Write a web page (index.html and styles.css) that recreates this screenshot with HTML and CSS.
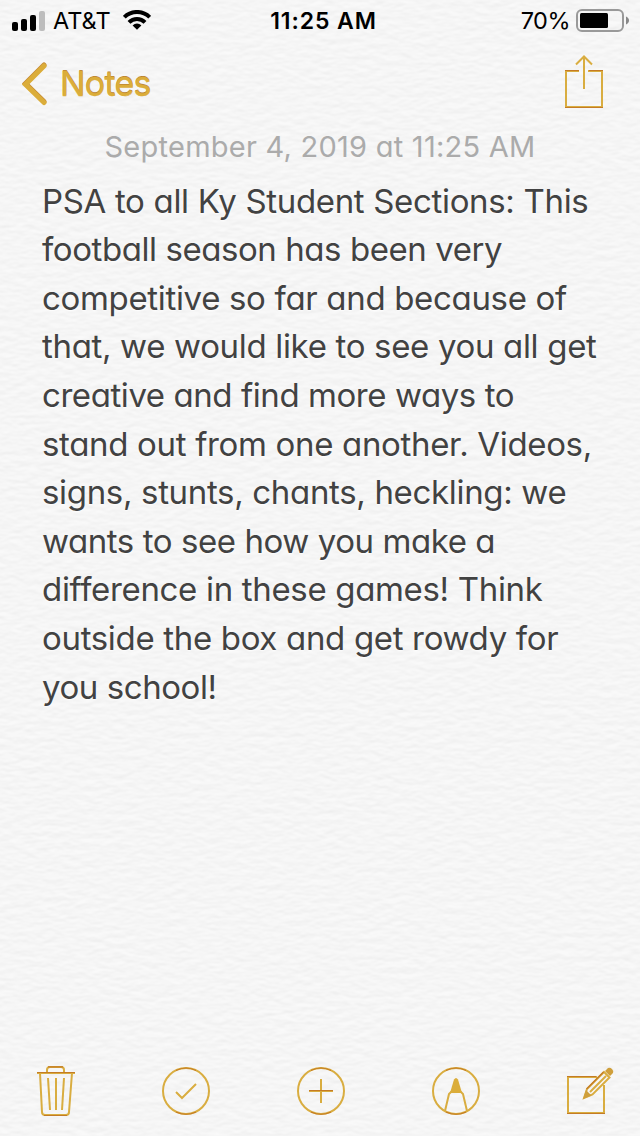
FILE: index.html
```
<!doctype html>
<html lang="en">
    <head>
        <meta charset="utf-8">
        <meta name="viewport" content="width=device-width,initial-scale=1">
        <title>Notes</title>
        <link rel="stylesheet" href="styles.css">
    </head>
    <body>
        <svg class="paper" width="640" height="1136" aria-hidden="true">
            <filter id="grain" x="0" y="0" width="100%" height="100%" color-interpolation-filters="sRGB">
                <feTurbulence type="fractalNoise" baseFrequency="0.08 0.17" numOctaves="2" seed="4"/>
                <feColorMatrix values="0 0 0 0 0.5  0 0 0 0 0.5  0 0 0 0 0.5  1 0 0 0 0"/>
                <feDiffuseLighting surfaceScale="0.35" diffuseConstant="1.13" lighting-color="#f6f6f6">
                    <feDistantLight azimuth="270" elevation="62"/>
                </feDiffuseLighting>
            </filter>
            <rect width="640" height="1136" filter="url(#grain)"/>
        </svg>
        <div class="screen">
            <header class="status">
                <div class="carrier">
                    <svg width="34" height="22" viewBox="0 0 34 22">
                        <rect x="0" y="12" width="6" height="9" rx="2"/>
                        <rect x="9" y="9" width="6" height="12" rx="2"/>
                        <rect x="18" y="5" width="6" height="16" rx="2"/>
                        <rect x="27" y="1" width="6" height="20" rx="2" fill="#bdbdbd"/>
                    </svg>
                    <span class="network">AT&amp;T</span>
                    <svg class="wifi" width="28" height="20" viewBox="0 0 28 20">
                        <g fill="none" stroke="#000" stroke-width="4">
                            <path d="M1.3 7.2a18 18 0 0 1 25.4 0"/>
                            <path d="M6 12.400a11.3 11.3 0 0 1 16 0"/>
                        </g>
                        <path d="M9.6 15.4a6.2 6.2 0 0 1 8.8 0L14 19.8z"/>
                    </svg>
                </div>
                <div class="time">11:25 AM</div>
                <div class="power">
                    <span class="percent">70%</span>
                    <svg width="53" height="24" viewBox="0 0 53 24">
                        <rect x="1" y="1" width="46" height="21" rx="5" fill="none" stroke="#999" stroke-width="2"/>
                        <rect x="4" y="4" width="28" height="15" rx="1.5"/>
                        <path d="M50 7.5c4 1.5 4 6.5 0 8z" fill="#888"/>
                    </svg>
                </div>
            </header>
            <nav class="navbar">
                <a class="back">
                    <svg class="icon" width="26" height="44" viewBox="0 0 26 44">
                        <path d="M23 4 4.500 22.500l18.500 18" fill="none" stroke="#dbad3a" stroke-width="5" stroke-linecap="round"/>
                    </svg>
                    <span class="label">Notes</span>
                </a>
                <svg class="icon share" width="40" height="54" viewBox="0 0 40 54">
                    <g class="line">
                        <path d="M15 16H2v36h36V16H24M20 34V2M12 9.500l8-8 8 8"/>
                    </g>
                    <path class="edge" d="M1 15.500h14M25 15.500h14M1 52.500h38"/>
                </svg>
            </nav>
            <main class="note">
                <div class="date">September 4, 2019 at 11:25 AM</div>
                <p class="text">
                    <span>PSA to all Ky Student Sections: This</span><br>
                    <span class="tight">football season has been very</span><br>
                    <span>competitive so far and because of</span><br>
                    <span>that, we would like to see you all get</span><br>
                    <span class="tight">creative and find more ways to</span><br>
                    <span>stand out from one another. Videos,</span><br>
                    <span>signs, stunts, chants, heckling: we</span><br>
                    <span class="tight">wants to see how you make a</span><br>
                    <span>difference in these games! Think</span><br>
                    <span>outside the box and get rowdy for</span><br>
                    <span class="tight">you school!</span>
                </p>
            </main>
            <footer class="toolbar">
                <svg class="icon" width="40" height="52" viewBox="0 0 40 52">
                    <g class="line">
                        <path d="M1 8h38M11 8V5q0-3 3-3h11q3 0 3 3v3M4 8l2 39q0 3 3 3h21q3 0 3-3l3-39"/>
                        <path d="M12 13l2 32M20 13v32M28 13l-2 32"/>
                    </g>
                    <path class="edge" d="M1 7.500h38M12 1.800h15M8 50.500h23"/>
                </svg>
                <svg class="icon" width="50" height="50" viewBox="0 0 50 50">
                    <g class="line">
                        <circle cx="25" cy="25" r="23"/>
                        <path d="M15 26l6 6 14-14"/>
                    </g>
                    <path class="edge" d="M15 4.500q10-5 20 0M15 46q10 4.500 20 0"/>
                </svg>
                <svg class="icon" width="50" height="50" viewBox="0 0 50 50">
                    <g class="line">
                        <circle cx="25" cy="25" r="23"/>
                        <path d="M25 13v24M13 25h24"/>
                    </g>
                    <path class="edge" d="M13 24.500h24M15 4.500q10-5 20 0M15 46q10 4.500 20 0"/>
                </svg>
                <svg class="icon" width="50" height="50" viewBox="0 0 50 50">
                    <g class="line">
                        <circle cx="25" cy="25" r="23"/>
                        <path d="M14 45l4-17 2-2h10l2 2 4 17"/>
                    </g>
                    <path d="M23 13.500q2-3 4 0l4 13.500h-12z" fill="#dbad3a"/>
                    <path class="edge" d="M15 4.500q10-5 20 0M15 46q10 4.500 20 0"/>
                </svg>
                <svg class="icon" width="48" height="50" viewBox="0 0 48 50">
                    <g class="line">
                        <path d="M31 11H2v36h36V19"/>
                        <path d="M18 32l3-9L38 6l5.500 5.500-17 17zM24 26l16-16"/>
                    </g>
                    <path d="M39 5l3-3q2-1 4 1t1 4l-3 3zM17 33l3-9 5.500 5.500z" fill="#cf9f3b"/>
                    <path class="edge" d="M1 10.500h29M1 47.500h38M20.500 23L37.500 6"/>
                </svg>
            </footer>
        </div>
    </body>
</html>
```

FILE: styles.css
```
html{
    background: #f6f6f6;
}
html, body{
    margin: 0;
    padding: 0;
}
body{
    font-family: Inter, "Liberation Sans", sans-serif;
    font-feature-settings: "cv11", "calt" 0;
}
.paper{
    position: absolute;
    top: 0;
    left: 0;
    z-index: -1;
    opacity: 0.35;
}
.screen{
    width: 640px;
    height: 1136px;
    display: flex;
    flex-direction: column;
    overflow: hidden;
}
.status{
    height: 41px;
    padding: 0 11px 0 12px;
    display: grid;
    grid-template-columns: 1fr auto 1fr;
    align-items: center;
    font-size: 23.500px;
    line-height: 41px;
}
.carrier, .power{
    display: flex;
    align-items: center;
}
.network{
    margin-left: 7px;
}
.wifi{
    margin-left: 12px;
    margin-bottom: 1px;
}
.time{
    font-size: 23px;
    font-weight: 600;
    letter-spacing: 0.9px;
    padding-left: 6px;
    padding-top: 2px;
    line-height: 39px;
}
.power{
    justify-content: flex-end;
    gap: 6px;
}
.percent{
    letter-spacing: -0.5px;
}
.navbar{
    height: 87px;
    padding: 0 36px 0 21px;
    display: flex;
    justify-content: space-between;
    align-items: center;
}
.share{
    margin-bottom: 6px;
}
.back{
    display: flex;
    align-items: center;
    gap: 13px;
    margin-bottom: 2px;
    color: #dbad3a;
    font-size: 34px;
    letter-spacing: -0.8px;
    -webkit-text-stroke: 0.4px #dbad3a;
}
.label{
    text-shadow: 0 -1px 0 #bb8232;
}
.back .icon{
    filter: drop-shadow(0 -1px 0 #c58a35);
}
.line{
    fill: none;
    stroke: #d9ad40;
    stroke-width: 2;
}
.edge{
    fill: none;
    stroke: #c47b25;
    stroke-width: 1.200;
}
.note{
    flex: 1;
    padding: 0 20px 0 42px;
}
.date{
    margin-left: -42px;
    margin-right: -20px;
    height: 38px;
    line-height: 38px;
    text-align: center;
    font-size: 29px;
    letter-spacing: 0.250px;
    color: #ababab;
}
.text{
    margin: 10.600px 0 0;
    font-size: 33px;
    line-height: 48.600px;
    letter-spacing: -0.330px;
    color: #424242;
    white-space: nowrap;
    text-shadow: 0 1px 2px #fff;
}
.tight{
    letter-spacing: -0.430px;
}
.toolbar{
    height: 91px;
    padding: 0 26px 0 36px;
    display: flex;
    justify-content: space-between;
    align-items: center;
}
```
